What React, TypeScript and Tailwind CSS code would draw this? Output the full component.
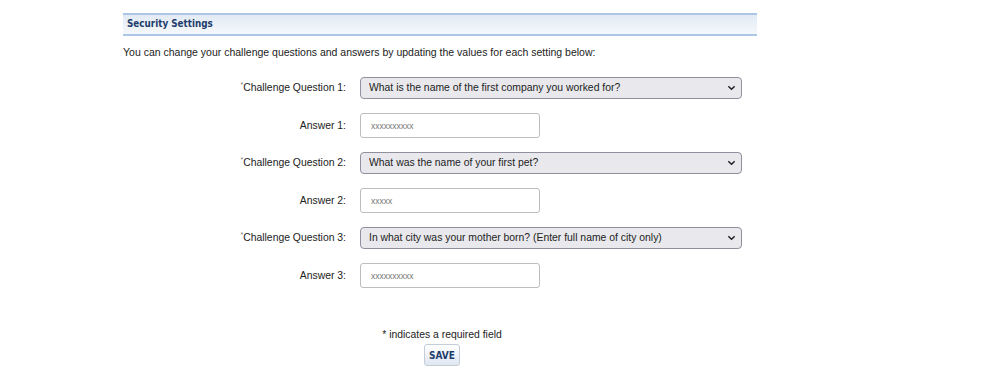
import { useState } from "react";

const questions = [
  {
    label: "Challenge Question 1:",
    answerLabel: "Answer 1:",
    value: "What is the name of the first company you worked for?",
    answer: "xxxxxxxxxx",
  },
  {
    label: "Challenge Question 2:",
    answerLabel: "Answer 2:",
    value: "What was the name of your first pet?",
    answer: "xxxxx",
  },
  {
    label: "Challenge Question 3:",
    answerLabel: "Answer 3:",
    value: "In what city was your mother born? (Enter full name of city only)",
    answer: "xxxxxxxxxx",
  },
];

const Chevron = () => (
  <svg
    className="absolute right-[6px] top-[7px] pointer-events-none"
    width="9"
    height="8"
    viewBox="0 0 10 9"
    fill="none"
    stroke="#222"
    strokeWidth={1.7}
  >
    <path d="M2 3l3 3 3-3" strokeLinecap="round" strokeLinejoin="round" />
  </svg>
);

const App = () => {
  const [values, setValues] = useState(questions.map((q) => q.value));

  return (
    <div
      className="w-[994px] h-[384px] bg-white text-[#222]"
      style={{ fontFamily: '"Liberation Sans", Arial, sans-serif' }}
    >
      <div className="ml-[123px] w-[634px] pt-[13px]">
        <div className="h-[23px] border-t-2 border-b-2 border-[#adc6e7] bg-gradient-to-b from-[#e2eaf4] to-[#f5f8fb] flex items-center pl-[4px]">
          <span
            className="text-[9.8px] font-bold text-[#1e3d6b]"
            style={{ fontFamily: '"DejaVu Sans Condensed", "DejaVu Sans", sans-serif' }}
          >
            Security Settings
          </span>
        </div>

        <p className="mt-[10px] text-[10.5px] leading-[13px] text-[#222]">
          You can change your challenge questions and answers by updating the values for each setting below:
        </p>

        <div className="mt-[18px] flex flex-col gap-[14px]">
          {questions.map((q, i) => (
            <div key={q.label} className="flex flex-col gap-[14px]">
              <div className="flex items-center">
                <label className="w-[223px] text-right text-[10.4px] text-[#222]">
                  <span className="text-[7px] align-top text-[#777]">*</span>
                  {q.label}
                </label>
                <div className="relative ml-[14px]">
                  <select
                    value={values[i]}
                    onChange={(e) => {
                      const next = [...values];
                      next[i] = e.target.value;
                      setValues(next);
                    }}
                    className="appearance-none block w-[382px] h-[22px] pl-[8px] text-[10.4px] text-[#222] bg-[#e9e9ed] border border-[#8f8f9d] rounded-[4px]"
                  >
                    <option>{q.value}</option>
                  </select>
                  <Chevron />
                </div>
              </div>
              <div className="flex items-center">
                <label className="w-[223px] text-right text-[10.4px] text-[#222]">{q.answerLabel}</label>
                <input
                  type="text"
                  placeholder={q.answer}
                  className="ml-[14px] w-[180px] h-[25px] pl-[10px] text-[8.5px] border border-[#bdbdbd] rounded-[3px] placeholder:text-[#777]"
                />
              </div>
            </div>
          ))}
        </div>

        <div className="mt-[40px] flex flex-col items-center pl-[4px]">
          <p className="text-[10.4px] leading-[13px] text-[#222]">* indicates a required field</p>
          <button
            className="mt-[3px] h-[22px] px-[4px] rounded-[3px] border border-[#c5cdd8] bg-gradient-to-b from-[#ffffff] to-[#dfe7f1] text-[10px] font-bold text-[#1e3d6b]"
            style={{ fontFamily: '"DejaVu Sans Condensed", "DejaVu Sans", sans-serif' }}
          >
            SAVE
          </button>
        </div>
      </div>
    </div>
  );
};

export default App;
